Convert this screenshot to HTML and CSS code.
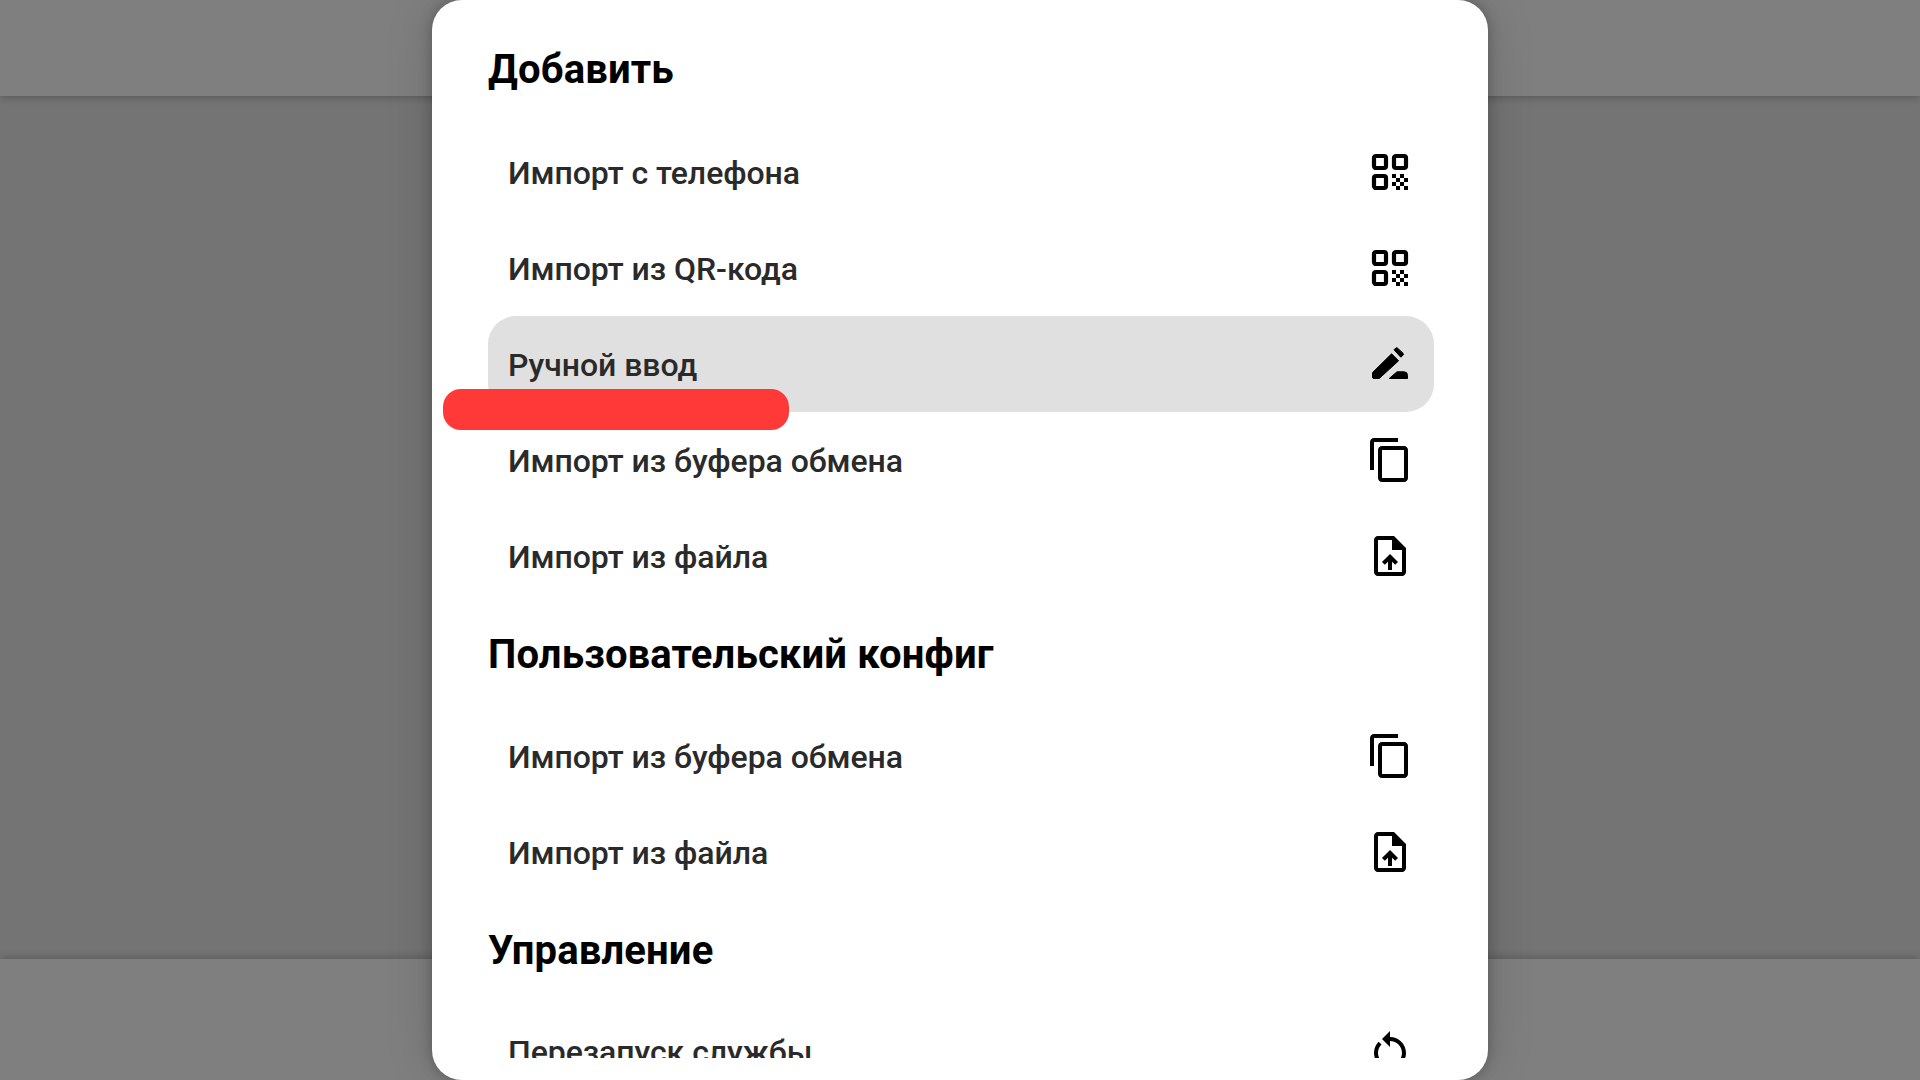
FILE: index.html
```html
<!DOCTYPE html>
<html lang="ru">
<head>
<meta charset="utf-8">
<title>Добавить</title>
<link rel="stylesheet" href="styles.css">
</head>
<body>
<svg class="defs" width="0" height="0" aria-hidden="true">
  <symbol id="i-qr" viewBox="0 0 24 24">
    <rect x="4" y="4" width="6" height="6" rx="1" fill="none" stroke="#000" stroke-width="2.100"/>
    <rect x="14" y="4" width="6" height="6" rx="1" fill="none" stroke="#000" stroke-width="2.100"/>
    <rect x="4" y="14" width="6" height="6" rx="1" fill="none" stroke="#000" stroke-width="2.100"/>
    <path d="M19 19h2v2h-2zM13 13h2v2h-2zM15 15h2v2h-2zM13 17h2v2h-2zM15 19h2v2h-2zM17 17h2v2h-2zM17 13h2v2h-2zM19 15h2v2h-2z"/>
  </symbol>
  <symbol id="i-edit" viewBox="0 0 24 24">
    <path stroke="#000" stroke-width="0.500" stroke-linejoin="round" d="M3.250 16.300 12.800 6.900l3.500 3.500-9.700 8.850H4a.75.75 0 0 1-.75-.75zM14 4.900l.9-.9a.6.6 0 0 1 .8 0l2.900 2.700a.6.6 0 0 1 0 .8l-1.200 1.100zM11.600 19.250l3.900-3.350H19a1.750 1.750 0 0 1 1.750 1.750v1.600z"/>
  </symbol>
  <symbol id="i-copy" viewBox="0 0 24 24">
    <path d="M16 1H4c-1.100 0-2 .9-2 2v14h2V3h12V1zm3 4H8c-1.100 0-2 .9-2 2v14c0 1.100.9 2 2 2h11c1.100 0 2-.9 2-2V7c0-1.100-.9-2-2-2zm0 16H8V7h11v14z"/>
  </symbol>
  <symbol id="i-file" viewBox="0 0 24 24">
    <path d="M14 2H6c-1.100 0-1.990.9-1.990 2L4 20c0 1.100.890 2 1.990 2H18c1.100 0 2-.9 2-2V8l-6-6zm4 18H6V4h7v5h5v11zM8 15.010l1.410 1.410L11 14.840V19h2v-4.160l1.590 1.590L16 15.010 12.010 11z"/>
  </symbol>
  <symbol id="i-restart" viewBox="0 0 24 24">
    <path d="M12 5V2L8 6l4 4V7c3.310 0 6 2.690 6 6 0 2.970-2.170 5.430-5 5.910v2.020c3.950-.49 7-3.850 7-7.930 0-4.420-3.580-8-8-8zm-6 8c0-1.650.67-3.150 1.760-4.240L6.340 7.340C4.900 8.790 4 10.790 4 13c0 4.080 3.050 7.440 7 7.930v-2.020c-2.830-.48-5-2.940-5-5.910z"/>
  </symbol>
</svg>

<div class="backdrop">
  <div class="bar bar-top"></div>
  <div class="middle"></div>
  <div class="bar bar-bottom"></div>
</div>

<section class="sheet">
  <div class="sheet-clip">
    <h2 class="heading heading-first">Добавить</h2>
    <div class="row"><span>Импорт с телефона</span><svg class="icon"><use href="#i-qr"/></svg></div>
    <div class="row"><span>Импорт из QR-кода</span><svg class="icon"><use href="#i-qr"/></svg></div>
    <div class="row row-active"><span>Ручной ввод</span><svg class="icon"><use href="#i-edit"/></svg></div>
    <div class="row"><span>Импорт из буфера обмена</span><svg class="icon"><use href="#i-copy"/></svg></div>
    <div class="row"><span>Импорт из файла</span><svg class="icon"><use href="#i-file"/></svg></div>
    <h2 class="heading">Пользовательский конфиг</h2>
    <div class="row"><span>Импорт из буфера обмена</span><svg class="icon"><use href="#i-copy"/></svg></div>
    <div class="row"><span>Импорт из файла</span><svg class="icon"><use href="#i-file"/></svg></div>
    <h2 class="heading heading-last">Управление</h2>
    <div class="row"><span>Перезапуск службы</span><svg class="icon"><use href="#i-restart"/></svg></div>
  </div>
  <div class="redaction"></div>
</section>
</body>
</html>
```

FILE: styles.css
```css
html, body {
  margin: 0;
  height: 100%;
  overflow: hidden;
}
body {
  position: relative;
  font-family: Roboto, "Noto Sans", sans-serif;
  background: #747474;
}
.defs {
  position: absolute;
}
.backdrop {
  height: 1080px;
  display: flex;
  flex-direction: column;
}
.bar {
  background: #7f7f7f;
  flex: none;
}
.bar-top {
  height: 96px;
  box-shadow: 0 2px 7px rgba(0, 0, 0, 0.22);
  position: relative;
}
.bar-bottom {
  height: 121px;
  box-shadow: 0 -2px 8px rgba(0, 0, 0, 0.2);
  position: relative;
}
.middle {
  flex: 1;
}
.sheet {
  position: absolute;
  left: 432px;
  top: 0;
  width: 1056px;
  height: 1080px;
  background: #fff;
  border-radius: 30px;
  box-shadow: 0 0 14px rgba(0, 0, 0, 0.25), 0 0 50px rgba(0, 0, 0, 0.14);
}
.sheet-clip {
  height: 1058px;
  overflow: hidden;
  padding: 0 54px 0 56px;
  box-sizing: border-box;
}
.heading {
  margin: 0;
  height: 104px;
  padding-bottom: 4px;
  box-sizing: border-box;
  display: flex;
  align-items: center;
  font-size: 40px;
  font-weight: 700;
  letter-spacing: 0.15px;
  color: #000;
}
.heading-first {
  height: 124px;
  padding-top: 15px;
  padding-bottom: 0;
}
.heading-last {
  height: 103px;
  padding-bottom: 2px;
}
.row {
  height: 96px;
  display: flex;
  align-items: center;
  justify-content: space-between;
  padding: 0 20px;
  font-size: 32px;
  font-weight: 500;
  letter-spacing: -0.05px;
  color: #2a2a2a;
  border-radius: 28px;
}
.row span {
  padding-top: 2px;
}
.row-active {
  background: #e0e0e0;
}
.icon {
  width: 48px;
  height: 48px;
  fill: #000;
  flex: none;
}
.redaction {
  position: absolute;
  left: 11px;
  top: 389px;
  width: 346px;
  height: 41px;
  background: #ff3838;
  border-radius: 18px;
}
```
